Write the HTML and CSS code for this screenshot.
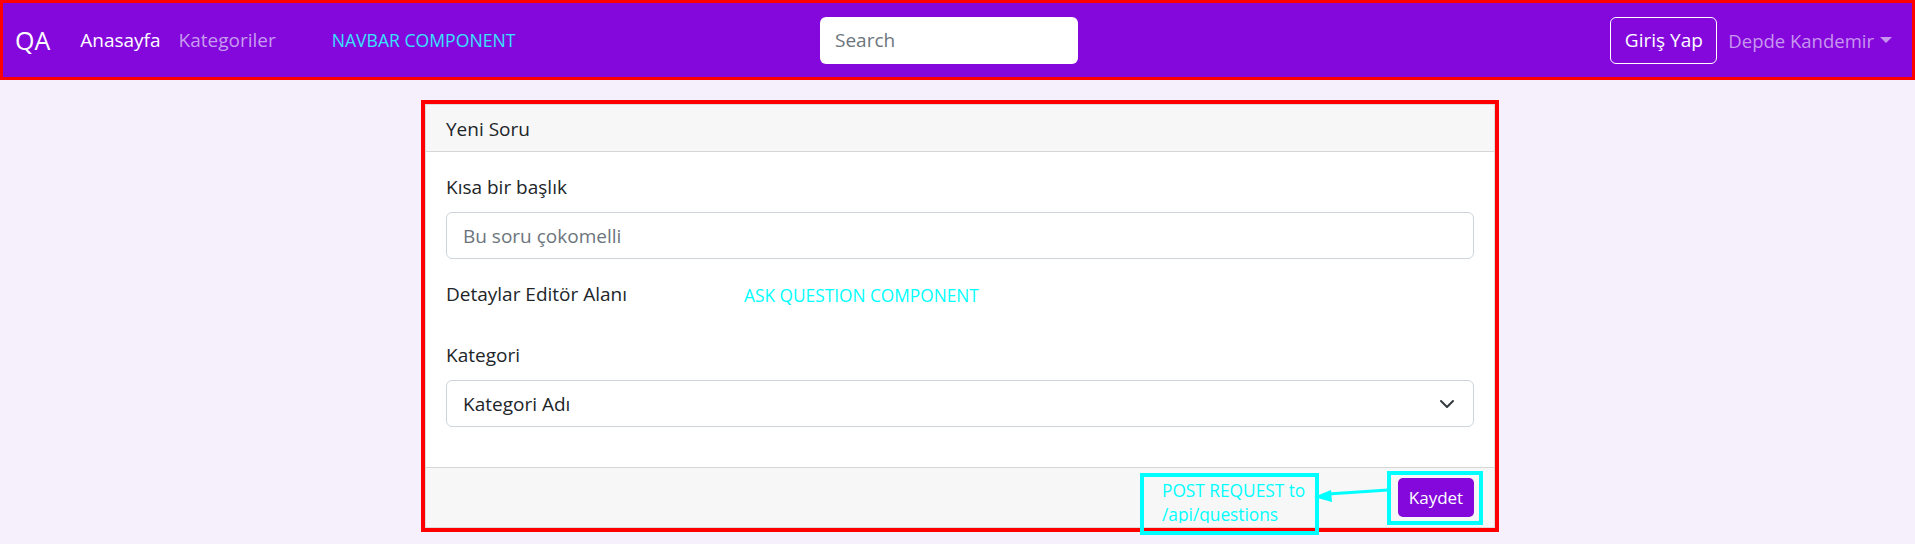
FILE: index.html
```html
<!DOCTYPE html>
<html lang="tr">
<head>
<meta charset="utf-8">
<title>QA</title>
<link rel="stylesheet" href="styles.css">
</head>
<body>
<nav class="navbar">
  <div class="nav-left">
    <span class="brand">QA</span>
    <span class="nav-link active">Anasayfa</span>
    <span class="nav-link">Kategoriler</span>
    <span class="note-nav">NAVBAR COMPONENT</span>
  </div>
  <div class="search">Search</div>
  <div class="nav-right">
    <span class="btn-login">Giriş Yap</span>
    <span class="user">Depde Kandemir<span class="caret"></span></span>
  </div>
</nav>

<main class="page">
  <section class="card">
    <header class="card-header">Yeni Soru</header>
    <div class="card-body">
      <div class="label">Kısa bir başlık</div>
      <div class="input placeholder">Bu soru çokomelli</div>
      <div class="editor-row">
        <span class="label">Detaylar Editör Alanı</span>
        <span class="note-ask">ASK QUESTION COMPONENT</span>
      </div>
      <div class="label">Kategori</div>
      <div class="input select">
        <span>Kategori Adı</span>
        <svg class="chev" width="16" height="16" viewBox="0 0 16 16"><path d="M2 5l6 6 6-6" fill="none" stroke="#343a40" stroke-width="2" stroke-linecap="round" stroke-linejoin="round"/></svg>
      </div>
    </div>
    <footer class="card-footer">
      <span class="btn-save">Kaydet</span>
    </footer>
  </section>
</main>

<div class="note-post"><div class="note-post-text">POST REQUEST to<br>/api/questions</div></div>
<div class="note-save"></div>
<svg class="arrow" width="80" height="22" viewBox="0 0 80 22"><line x1="78" y1="6" x2="18" y2="10" stroke="#00ffff" stroke-width="3"/><polygon points="4,13 21,6 22,18" fill="#00ffff"/></svg>
</body>
</html>
```

FILE: styles.css
```css
* { box-sizing: border-box; }
html, body { margin: 0; padding: 0; }
body {
  width: 1915px;
  height: 544px;
  background: #f6f0fc;
  font-family: "Open Sans", "Noto Sans", sans-serif;
  color: #212529;
  position: relative;
  overflow: hidden;
}

.navbar {
  height: 80px;
  background: #8408dc;
  border: 3px solid #ff0000;
  display: flex;
  align-items: center;
  padding: 0 20px 0 12px;
}
.nav-left {
  width: 805px;
  display: flex;
  align-items: center;
}
.brand {
  color: #fff;
  font-size: 25px;
  margin-right: 20px;
}
.nav-link {
  font-size: 19px;
  padding: 0 10px;
  color: #c79cf0;
}
.nav-link.active { color: #fff; }
.nav-link + .nav-link { margin-left: -2px; }
.note-nav {
  margin-left: 46px;
  color: #38e2ff;
  font-size: 17.6px;
}
.search {
  width: 258px;
  height: 47px;
  background: #fff;
  border-radius: 6px;
  color: #6c757d;
  font-size: 19px;
  display: flex;
  align-items: center;
  padding-left: 15px;
}
.nav-right {
  margin-left: auto;
  display: flex;
  align-items: center;
}
.btn-login {
  height: 47px;
  width: 107px;
  border: 1.5px solid #fff;
  border-radius: 6px;
  color: #fff;
  font-size: 19px;
  display: flex;
  align-items: center;
  justify-content: center;
  margin-right: 11px;
}
.user {
  color: #c796ef;
  font-size: 18.5px;
  display: flex;
  align-items: center;
}
.caret {
  display: inline-block;
  margin-left: 6px;
  width: 0;
  height: 0;
  border-left: 6px solid transparent;
  border-right: 6px solid transparent;
  border-top: 6px solid #c796ef;
}

.page {
  padding-top: 24px;
  padding-left: 425px;
}
.card {
  width: 1070px;
  background: #fff;
  border: 1px solid #dcdcdc;
  outline: 4px solid #ff0000;
}
.card-header {
  height: 47px;
  background: #f7f7f7;
  border-bottom: 1px solid #d6d6d6;
  padding: 0 20px;
  display: flex;
  align-items: center;
  font-size: 19px;
  padding-top: 1px;
}
.card-body {
  padding: 20px 20px 40px;
}
.label {
  font-size: 19px;
  line-height: 30px;
  margin-bottom: 10px;
}
.input {
  height: 47px;
  border: 1px solid #ced4da;
  border-radius: 6px;
  padding: 0 16px;
  display: flex;
  align-items: center;
  font-size: 19px;
  margin-bottom: 20px;
}
.placeholder { color: #6c757d; }
.editor-row {
  display: flex;
  align-items: flex-start;
  height: 61px;
}
.note-ask {
  color: #00ffff;
  font-size: 17.3px;
  margin-left: 117px;
  margin-top: 5px;
}
.select {
  justify-content: space-between;
  margin-bottom: 0;
  padding-right: 18px;
  color: #212529;
}
.card-footer {
  height: 60px;
  background: #f7f7f7;
  border-top: 1px solid #d6d6d6;
  padding: 0 20px;
  display: flex;
  align-items: center;
  justify-content: flex-end;
}
.btn-save {
  width: 76px;
  height: 39px;
  background: #8408dc;
  color: #fff;
  border-radius: 5px;
  font-size: 17px;
  display: flex;
  align-items: center;
  justify-content: center;
}

.note-post {
  position: absolute;
  left: 1140px;
  top: 473px;
  width: 179px;
  height: 62px;
  border: 4px solid #00ffff;
}
.note-post-text {
  height: 46px;
  overflow: hidden;
  padding: 2px 0 0 18px;
  color: #00ffff;
  font-size: 17.3px;
  line-height: 24px;
  white-space: nowrap;
}
.note-save {
  position: absolute;
  left: 1387px;
  top: 471px;
  width: 96px;
  height: 54px;
  border: 4px solid #00ffff;
}
.arrow {
  position: absolute;
  left: 1310px;
  top: 484px;
}
```
